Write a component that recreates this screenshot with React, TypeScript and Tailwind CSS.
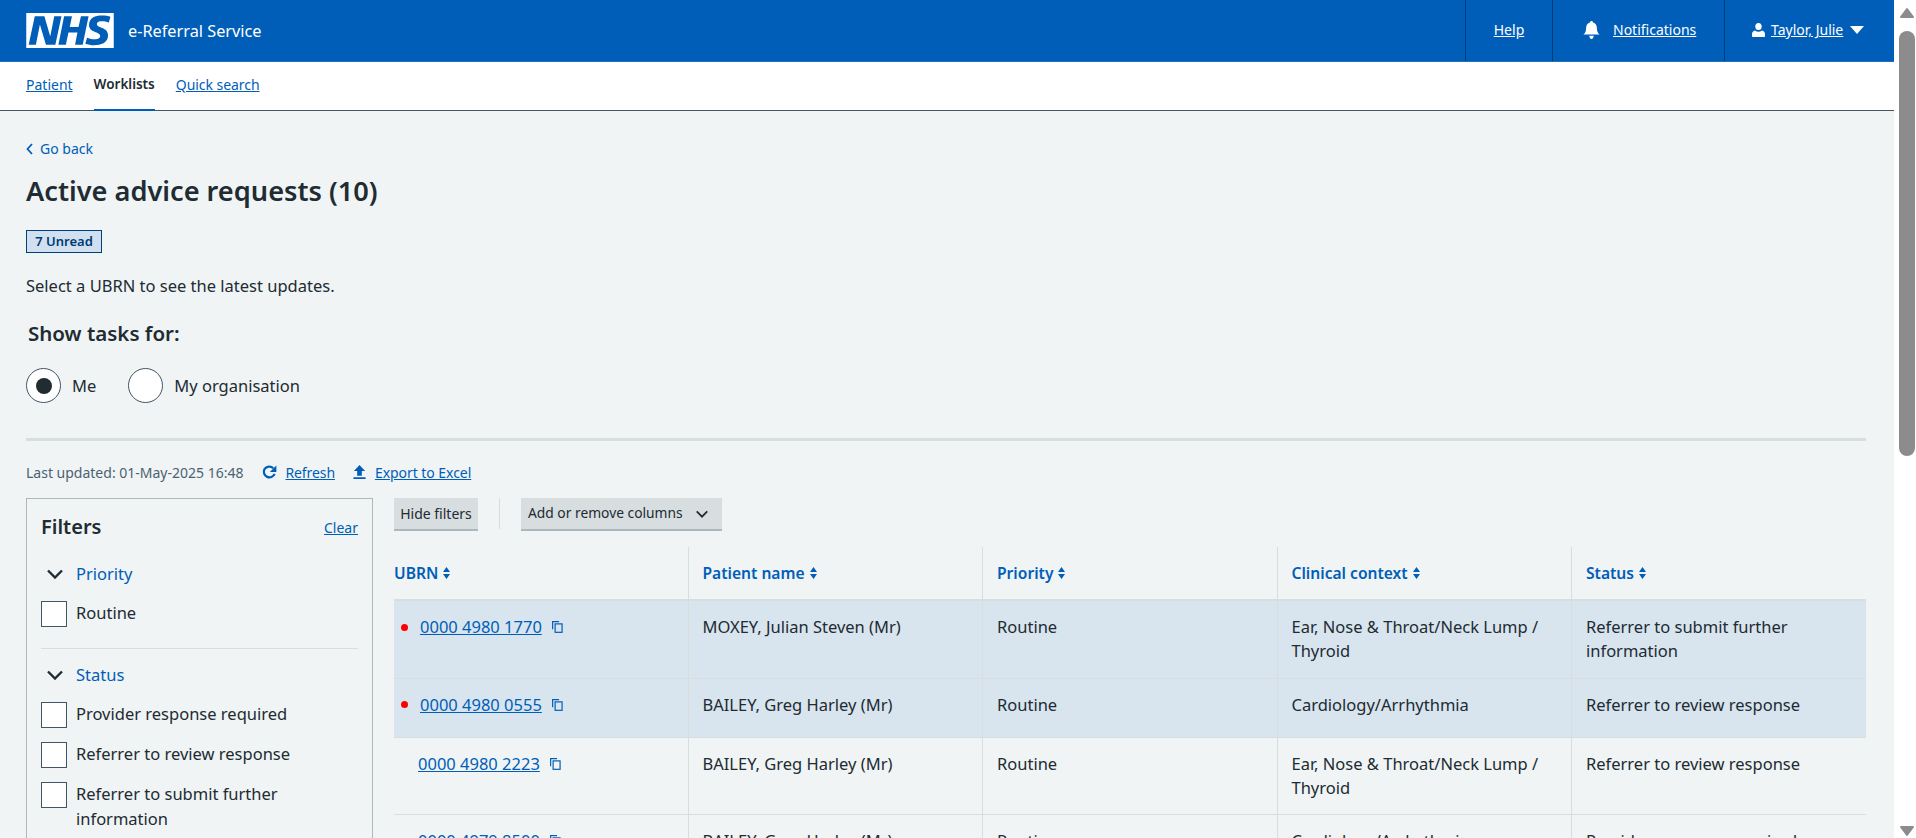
const font = "font-['Noto_Sans','Open_Sans',sans-serif]";

function NhsLogo() {
  return (
    <svg viewBox="0 0 40 16" className="w-[88px] h-[35px] shrink-0">
      <path fill="#ffffff" d="M0 0h40v16H0z" />
      <path
        fill="#005eb8"
        d="M3.9 1.5h4.4l2.6 9h.1l1.8-9h3.3l-2.8 13H9l-2.7-9h-.1l-1.8 9H1.1M17.3 1.5h3.6l-1 4.9h4L25 1.5h3.5l-2.7 13h-3.5l1.1-5.6h-4.1l-1.2 5.6h-3.4M37.7 4.4c-.7-.3-1.6-.6-2.9-.6-1.4 0-2.5.2-2.5 1.3 0 1.8 5.1 1.2 5.1 5.1 0 3.6-3.3 4.5-6.4 4.5-1.3 0-2.9-.3-4-.7l.8-2.7c.7.4 2.1.7 3.2.7s2.8-.2 2.8-1.5c0-2.1-5.1-1.3-5.1-5 0-3.4 2.9-4.4 5.8-4.4 1.6 0 3.1.2 4 .6"
      />
    </svg>
  );
}

function Chevron({ className }: { className: string }) {
  return (
    <svg viewBox="0 0 16 10" className={className} fill="none" stroke="currentColor" strokeWidth="2.4">
      <path d="M1 1.500l7 7 7-7" />
    </svg>
  );
}

function SortIcon() {
  return (
    <svg viewBox="0 0 7 12" className="w-[7px] h-3 ml-[5px] shrink-0" fill="#005eb8">
      <path d="M3.500 0L7 5H0zM0 7h7l-3.500 5z" />
    </svg>
  );
}

function CopyIcon() {
  return (
    <svg viewBox="0 0 12 13" className="w-[11px] h-3 shrink-0" fill="none" stroke="#005eb8" strokeWidth="1.300">
      <path d="M.7 9V.7h7" />
      <rect x="3.400" y="3.100" width="7.600" height="9.200" />
    </svg>
  );
}

function Checkbox({ label }: { label: string }) {
  return (
    <div className="flex gap-[9px] items-start">
      <div className="w-[26px] h-[26px] shrink-0 bg-white border border-[#425563]" />
      <span className="-mt-px text-[16.5px] leading-[25px] text-[#212b32]">{label}</span>
    </div>
  );
}

function FilterGroup({ title }: { title: string }) {
  return (
    <div className="flex items-center h-[24px]">
      <Chevron className="w-4 h-[10px] ml-[6px] text-[#212b32]" />
      <span className="ml-[13px] text-[16.5px] leading-6 text-[#005eb8]">{title}</span>
    </div>
  );
}

function Radio({ label, checked }: { label: string; checked?: boolean }) {
  return (
    <div className="flex items-center gap-[11px]">
      <div className="w-[35px] h-[35px] rounded-full bg-white border border-[#425563] flex items-center justify-center">
        {checked && <div className="w-4 h-4 rounded-full bg-[#212b32]" />}
      </div>
      <span className="mt-[2px] text-[16.5px] text-[#212b32]">{label}</span>
    </div>
  );
}

const rows = [
  { ubrn: '0000 4980 1770', name: 'MOXEY, Julian Steven (Mr)', context: 'Ear, Nose & Throat/Neck Lump / Thyroid', status: 'Referrer to submit further information', unread: true, h: 'h-[78px]' },
  { ubrn: '0000 4980 0555', name: 'BAILEY, Greg Harley (Mr)', context: 'Cardiology/Arrhythmia', status: 'Referrer to review response', unread: true, h: 'h-[59px]' },
  { ubrn: '0000 4980 2223', name: 'BAILEY, Greg Harley (Mr)', context: 'Ear, Nose & Throat/Neck Lump / Thyroid', status: 'Referrer to review response', unread: false, h: 'h-[77px]' },
  { ubrn: '0000 4979 8500', name: 'BAILEY, Greg Harley (Mr)', context: 'Cardiology/Arrhythmia', status: 'Provider response required', unread: false, h: 'h-[77px]' },
];

const columns = ['UBRN', 'Patient name', 'Priority', 'Clinical context', 'Status'];

export default function App() {
  return (
    <div className={`${font} flex h-[838px] overflow-hidden bg-white`}>
      <div className="w-[1894px] shrink-0 bg-[#f0f4f5] flex flex-col">
        {/* Header */}
        <header className="h-[62px] shrink-0 bg-[#005eb8] border-b border-[#1d6fc0] flex items-stretch pl-[26px] text-white">
          <div className="flex items-center flex-1">
            <NhsLogo />
            <span className="ml-[14px] text-[16.3px] mt-[2px]">e-Referral Service</span>
          </div>
          <div className="w-[87px] border-l border-[#003d78] flex items-center justify-center pb-[2px]">
            <a className="text-[14px] underline">Help</a>
          </div>
          <div className="w-[172px] border-l border-[#003d78] flex items-center pl-[30px] gap-[13px] pb-[2px]">
            <svg viewBox="0 0 18 20" className="w-[17px] h-[18px]" fill="#ffffff">
              <path d="M9 0c1 0 1.600.7 1.700 1.700C13.600 2.500 15 5 15 8c0 3.500 1 5.500 3 7H0c2-1.500 3-3.500 3-7 0-3 1.400-5.500 4.300-6.300C7.400.7 8 0 9 0zM6.500 16.500h5C11.300 18.500 10.300 20 9 20s-2.300-1.500-2.500-3.500z" />
            </svg>
            <a className="text-[14px] underline">Notifications</a>
          </div>
          <div className="w-[170px] border-l border-[#003d78] flex items-center pl-[27px] pb-[2px]">
            <svg viewBox="0 0 13 14" className="w-[13px] h-[14px]" fill="#ffffff">
              <path d="M6.500 0a3.200 3.500 0 110 7 3.200 3.500 0 010-7zM3 7.500c1 .8 2.200 1.200 3.500 1.200S9 8.300 10 7.500c1.800.5 3 1.800 3 3.500v2.300c0 .4-.3.700-.7.700H.7c-.4 0-.7-.3-.7-.7V11c0-1.700 1.200-3 3-3.500z" />
            </svg>
            <a className="ml-[6px] text-[14px] underline">Taylor, Julie</a>
            <svg viewBox="0 0 14 8" className="ml-[7px] w-[14px] h-2" fill="#ffffff">
              <path d="M0 0h14L7 8z" />
            </svg>
          </div>
        </header>

        {/* Tabs */}
        <nav className="h-[49px] shrink-0 bg-white border-b border-[#425563] flex items-stretch pl-[26px] gap-[21px] text-[14px]">
          <a className="pt-[12px] text-[#005eb8] underline">Patient</a>
          <a className="pt-[12px] text-[13.5px] font-semibold text-[#212b32] border-b-2 border-[#005eb8] -mb-px">Worklists</a>
          <a className="pt-[12px] text-[#005eb8] underline tracking-[-0.05px]">Quick search</a>
        </nav>

        <main className="flex-1 pl-[26px] pr-[28px] pt-[27px] text-[#212b32]">
          <a className="flex items-center h-[21px] text-[14px] text-[#005eb8]">
            <svg viewBox="0 0 7 12" className="w-[7px] h-3 mr-[7px]" fill="none" stroke="currentColor" strokeWidth="1.800">
              <path d="M6 1L1.500 6 6 11" />
            </svg>
            Go back
          </a>
          <h1 className="mt-[13px] text-[27.2px] leading-[38px] font-semibold">Active advice requests (10)</h1>
          <div className="mt-[20px] w-[76px] h-[23px] bg-[#d0e0f0] border border-[#00407d] flex items-center justify-center text-[13px] font-semibold text-[#003a70]">
            7 Unread
          </div>
          <p className="mt-[21px] text-[16.5px] leading-6">Select a UBRN to see the latest updates.</p>
          <h2 className="mt-[21px] ml-[2px] text-[20.5px] leading-[28px] font-semibold">Show tasks for:</h2>
          <div className="mt-[21px] flex gap-[32px]">
            <Radio label="Me" checked />
            <Radio label="My organisation" />
          </div>
          <div className="mt-[35px] h-[3px] bg-[#d8dde0]" />

          <div className="mt-[21px] h-[20px] flex items-center text-[14px]">
            <span className="text-[#4c6272]">Last updated: 01-May-2025 16:48</span>
            <svg viewBox="0 0 16 16" className="ml-[19px] w-[15px] h-[15px] mr-[8px]" fill="none" stroke="#005eb8" strokeWidth="2.400">
              <path d="M13.500 9.500A6 6 0 112.600 4.500 6 6 0 0112 3.500" />
              <path d="M15.300 .5v7h-7z" fill="#005eb8" stroke="none" />
            </svg>
            <a className="text-[#005eb8] underline tracking-[-0.1px]">Refresh</a>
            <svg viewBox="0 0 13 15" className="ml-[18px] w-[13px] h-[14px] mr-[9px]" fill="#005eb8">
              <path d="M6.500 0L12.500 6.500H9v5H4v-5H.5zM0 13h13v2H0z" />
            </svg>
            <a className="text-[#005eb8] underline tracking-[-0.05px]">Export to Excel</a>
          </div>

          <div className="mt-[16px] flex gap-[21px] items-start">
            {/* Filters */}
            <aside className="w-[347px] shrink-0 border border-[#aeb7bd] px-[14px] pt-[13px] pb-6">
              <div className="flex items-center justify-between h-[30px]">
                <h3 className="text-[20px] font-semibold">Filters</h3>
                <a className="text-[14px] text-[#005eb8] underline">Clear</a>
              </div>
              <div className="mt-[20px]">
                <FilterGroup title="Priority" />
              </div>
              <div className="mt-[15px]">
                <Checkbox label="Routine" />
              </div>
              <div className="mt-[21px] h-px bg-[#d8dde0]" />
              <div className="mt-[14px]">
                <FilterGroup title="Status" />
              </div>
              <div className="mt-[15px] flex flex-col gap-[14px]">
                <Checkbox label="Provider response required" />
                <Checkbox label="Referrer to review response" />
                <Checkbox label="Referrer to submit further information" />
              </div>
            </aside>

            <section className="flex-1 min-w-0">
              <div className="flex items-start">
                <button className="h-[33px] w-[84px] bg-[#d8dde0] border-b-2 border-[#aeb7bd] text-[14px] text-[#212b32]">
                  Hide filters
                </button>
                <div className="ml-[21px] w-px h-[31px] bg-[#d8dde0]" />
                <button className="ml-[21px] h-[33px] w-[201px] bg-[#d8dde0] border-b-2 border-[#aeb7bd] text-[13.8px] text-[#212b32] flex items-center pl-[7px]">
                  Add or remove columns
                  <Chevron className="ml-[13px] w-3 h-2" />
                </button>
              </div>

              <table className="mt-[16px] w-full table-fixed border-collapse text-[16.5px] leading-6">
                <thead>
                  <tr className="h-[53px] border-b-2 border-[#d8dde0]">
                    {columns.map((c, i) => (
                      <th
                        key={c}
                        className={`text-left font-semibold text-[15.6px] text-[#005eb8] ${i === 0 ? 'pl-0 w-[294px]' : 'pl-[14px] border-l border-[#d8dde0]'}`}
                      >
                        <span className="flex items-center">
                          {c}
                          <SortIcon />
                        </span>
                      </th>
                    ))}
                  </tr>
                </thead>
                <tbody>
                  {rows.map((r) => (
                    <tr key={r.ubrn} className={`${r.h} border-b border-[#d8dde0] ${r.unread ? 'bg-[#d8e4ee]' : ''}`}>
                      <td className="align-top pt-[14px]">
                        <div className={`flex items-center ${r.unread ? 'pl-[7px]' : 'pl-[24px]'}`}>
                          {r.unread && <span className="w-[7px] h-[7px] rounded-full bg-[#ff0000] mr-[12px]" />}
                          <a className="text-[#005eb8] underline">{r.ubrn}</a>
                          <span className="ml-[10px]">
                            <CopyIcon />
                          </span>
                        </div>
                      </td>
                      <td className="align-top pt-[14px] pl-[14px] pr-[14px] border-l border-[#d8dde0]">{r.name}</td>
                      <td className="align-top pt-[14px] pl-[14px] pr-[14px] border-l border-[#d8dde0]">Routine</td>
                      <td className="align-top pt-[14px] pl-[14px] pr-[14px] border-l border-[#d8dde0]">{r.context}</td>
                      <td className="align-top pt-[14px] pl-[14px] pr-[14px] border-l border-[#d8dde0]">{r.status}</td>
                    </tr>
                  ))}
                </tbody>
              </table>
            </section>
          </div>
        </main>
      </div>

      {/* Scrollbar */}
      <div className="w-[22px] shrink-0 bg-white flex flex-col items-center pl-[5px] pr-px">
        <svg viewBox="0 0 16 12" className="mt-[7px] w-4 h-3" fill="#8c8c8c" stroke="#8c8c8c" strokeWidth="2" strokeLinejoin="round">
          <path d="M8 2l6 8H2z" />
        </svg>
        <div className="mt-[12px] w-4 h-[425px] rounded-full bg-[#8c8c8c]" />
        <div className="flex-1" />
        <svg viewBox="0 0 16 12" className="mb-[1px] w-4 h-3" fill="#8c8c8c" stroke="#8c8c8c" strokeWidth="2" strokeLinejoin="round">
          <path d="M8 10L2 2h12z" />
        </svg>
      </div>
    </div>
  );
}
